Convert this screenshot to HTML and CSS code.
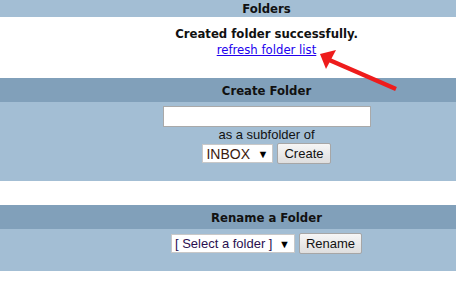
FILE: index.html
```html
<!DOCTYPE html>
<html>
<head>
<meta charset="utf-8">
<link rel="stylesheet" href="styles.css">
</head>
<body>
<div class="page">
  <div class="bar light">Folders</div>
  <div class="notice">
    <div class="msg">Created folder successfully.</div>
    <a class="link" href="#">refresh folder list</a>
  </div>
  <div class="bar dark">Create Folder</div>
  <div class="panel create">
    <input class="textbox" type="text">
    <div class="label">as a subfolder of</div>
    <div class="row">
      <span class="select w-inbox"><select><option>INBOX</option></select><span class="caret">▼</span></span>
      <button class="btn">Create</button>
    </div>
  </div>
  <div class="gap"></div>
  <div class="bar dark">Rename a Folder</div>
  <div class="panel rename">
    <div class="row">
      <span class="select w-folder"><select><option>[ Select a folder ]</option></select><span class="caret">▼</span></span>
      <button class="btn">Rename</button>
    </div>
  </div>
  <svg class="arrow" width="456" height="120" viewBox="0 0 456 120">
    <line x1="327" y1="59" x2="396" y2="89" stroke="#ee1c1c" stroke-width="4.5" stroke-linecap="butt"/>
    <polygon points="320,54 336,50 326,69" fill="#ee1c1c"/>
  </svg>
</div>
</body>
</html>
```

FILE: styles.css
```css
html, body {
  margin: 0;
  padding: 0;
  background: #fff;
}
.page {
  position: relative;
  width: 456px;
  font-family: "DejaVu Sans Condensed", "DejaVu Sans", sans-serif;
  color: #111;
}
.bar,
.notice,
.panel {
  box-sizing: border-box;
  padding-left: 77px;
}
.bar {
  display: flex;
  align-items: center;
  justify-content: center;
  font-weight: bold;
  font-size: 13px;
}
.bar.light {
  height: 17px;
  background: #a3bed4;
}
.bar.dark {
  height: 24px;
  background: #81a0ba;
}
.notice {
  height: 61px;
  padding-top: 9px;
  display: flex;
  flex-direction: column;
  align-items: center;
  font-size: 13px;
  line-height: 16px;
}
.msg {
  font-weight: bold;
}
.link {
  color: #2200ee;
  text-decoration: underline;
}
.panel {
  background: #a3bed4;
  display: flex;
  flex-direction: column;
  align-items: center;
  font-family: "Liberation Sans", Arial, sans-serif;
  font-size: 13px;
}
.panel.create {
  height: 79px;
  padding-top: 4px;
}
.panel.rename {
  height: 42px;
  padding-top: 4px;
}
.textbox {
  width: 208px;
  height: 21px;
  box-sizing: border-box;
  border: 1px solid #a9a9a9;
  background: #fff;
  margin: 0;
  padding: 0 2px;
}
.label {
  line-height: 16px;
  color: #111;
}
.row {
  display: flex;
  align-items: center;
  gap: 4px;
}
.select {
  display: inline-flex;
  align-items: center;
  height: 19px;
  box-sizing: border-box;
  border: 1px solid #c8c8c8;
  background: #fff;
  padding: 0 4px 0 3px;
}
.select select {
  appearance: none;
  -webkit-appearance: none;
  border: none;
  background: transparent;
  font-family: "Liberation Sans", Arial, sans-serif;
  font-size: 14px;
  color: #3a1a10;
  padding: 0;
  margin: 0;
  flex: 1;
  min-width: 0;
  outline: none;
}
.w-inbox { width: 71px; }
.w-folder { width: 124px; }
.w-folder select {
  color: #2a1050;
  font-size: 13px;
}
.caret {
  font-size: 11px;
  color: #000;
}
.btn {
  height: 21px;
  box-sizing: border-box;
  border: 1px solid #a6a6a6;
  border-radius: 2px;
  background: linear-gradient(#f6f6f6, #dedede);
  font-family: "Liberation Sans", Arial, sans-serif;
  font-size: 13px;
  color: #111;
  padding: 0 6px;
  margin: 0;
}
.gap {
  height: 24px;
}
.arrow {
  position: absolute;
  left: 0;
  top: 0;
}
```
